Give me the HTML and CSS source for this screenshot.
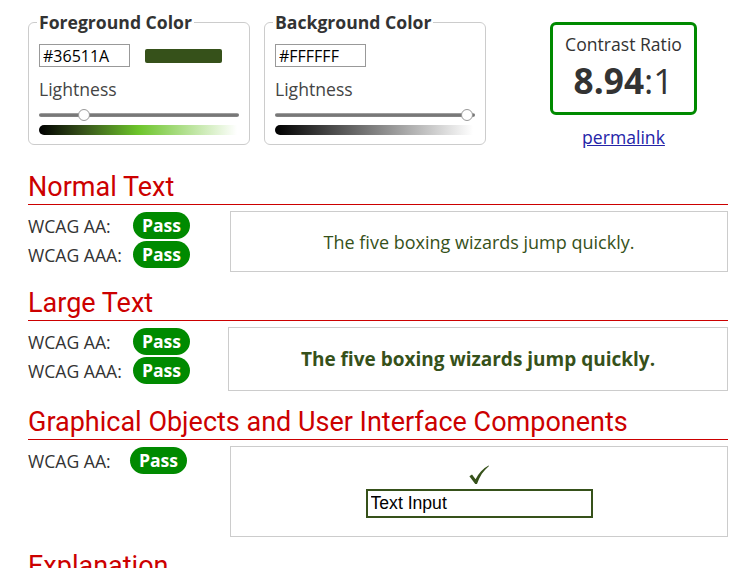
FILE: index.html
```html
<!DOCTYPE html>
<html lang="en">
<head>
<meta charset="utf-8">
<title>Contrast Checker</title>
<link rel="stylesheet" href="styles.css">
</head>
<body>
<div class="page">
  <div class="top">
    <fieldset class="picker">
      <legend class="picker-legend">Foreground Color</legend>
      <div class="hex-row">
        <input class="hex" type="text" value="#36511A">
        <span class="swatch"></span>
      </div>
      <div class="light-label">Lightness</div>
      <div class="slider">
        <div class="track"></div>
        <span class="thumb" style="--pos:0.21"></span>
      </div>
      <div class="grad grad-fg"></div>
    </fieldset>
    <fieldset class="picker picker-bg">
      <legend class="picker-legend">Background Color</legend>
      <div class="hex-row">
        <input class="hex" type="text" value="#FFFFFF">
      </div>
      <div class="light-label">Lightness</div>
      <div class="slider">
        <div class="track"></div>
        <span class="thumb" style="--pos:0.99"></span>
      </div>
      <div class="grad grad-bg"></div>
    </fieldset>
    <div class="ratio-col">
      <div class="ratio-box">
        <div class="ratio-title">Contrast Ratio</div>
        <div class="ratio-val"><b>8.94</b>:1</div>
      </div>
      <a class="permalink" href="#">permalink</a>
    </div>
  </div>

  <section class="result">
    <h2 class="result-title">Normal Text</h2>
    <div class="result-body">
      <div class="levels">
        <div class="level"><span class="level-name">WCAG AA:</span><span class="pass">Pass</span></div>
        <div class="level"><span class="level-name">WCAG AAA:</span><span class="pass">Pass</span></div>
      </div>
      <div class="sample sample-normal">The five boxing wizards jump quickly.</div>
    </div>
  </section>

  <section class="result">
    <h2 class="result-title">Large Text</h2>
    <div class="result-body">
      <div class="levels levels-large">
        <div class="level"><span class="level-name">WCAG AA:</span><span class="pass">Pass</span></div>
        <div class="level"><span class="level-name">WCAG AAA:</span><span class="pass">Pass</span></div>
      </div>
      <div class="sample sample-large">The five boxing wizards jump quickly.</div>
    </div>
  </section>

  <section class="result">
    <h2 class="result-title">Graphical Objects and User Interface Components</h2>
    <div class="result-body">
      <div class="levels">
        <div class="level"><span class="level-name level-name-narrow">WCAG AA:</span><span class="pass">Pass</span></div>
      </div>
      <div class="sample sample-ui">
        <svg class="check" width="20" height="19" viewBox="0 0 20 19" aria-hidden="true">
          <path d="M0.4 11.3 L3 9.6 L6.6 14.2 C9.6 8.2 14 3.4 19.6 0.4 L20 1 C14.6 5.4 10.4 11.6 8 19 L6.2 19 Z" fill="#36511A"/>
        </svg>
        <input class="ui-input" type="text" value="Text Input">
      </div>
    </div>
  </section>

  <section class="result result-last">
    <h2 class="result-title">Explanation</h2>
  </section>
</div>
</body>
</html>
```
FILE: styles.css
```css
html, body {
  margin: 0;
  padding: 0;
  background: #fff;
}
body {
  font-family: "Open Sans", "DejaVu Sans", sans-serif;
  font-size: 17.6px;
  color: #333;
}
.page {
  padding: 10px 16px 0 28px;
}

/* top row */
.top {
  display: flex;
  align-items: flex-start;
}
.picker {
  box-sizing: border-box;
  width: 222px;
  margin: 0;
  padding: 10px 10px 9px;
  border: 1px solid #ccc;
  border-radius: 6px;
}
.picker-bg {
  margin-left: 14px;
}
.picker-legend {
  padding: 0 2px;
  margin-left: -2px;
  font-weight: 700;
  font-size: 17.6px;
  line-height: 24px;
  color: #333;
}
.hex-row {
  display: flex;
  align-items: center;
  height: 23px;
}
.hex {
  box-sizing: border-box;
  width: 91px;
  height: 23px;
  margin: 0;
  padding: 0 3px;
  border: 1px solid #999;
  border-radius: 0;
  font-family: "Open Sans", sans-serif;
  font-size: 16px;
  color: #000;
  background: #fff;
  outline: none;
}
.swatch {
  width: 77px;
  height: 14px;
  margin-left: 15px;
  border-radius: 2px;
  background: #36511A;
}
.light-label {
  margin-top: 10px;
  line-height: 24px;
  color: #444;
}
.slider {
  position: relative;
  height: 12px;
  margin-top: 8px;
}
.track {
  position: absolute;
  left: 0;
  right: 0;
  top: 4px;
  height: 4px;
  border-radius: 2px;
  background: linear-gradient(to bottom, #b0b0b0, #6e6e6e 45%, #8a8a8a);
}
.thumb {
  position: absolute;
  top: 0;
  left: calc((100% - 12px) * var(--pos));
  box-sizing: border-box;
  width: 12px;
  height: 12px;
  border-radius: 50%;
  border: 1px solid #999;
  background: #fff;
}
.grad {
  height: 10px;
  margin-top: 4px;
  margin-right: 2px;
  border-radius: 5px 0 0 5px;
}
.grad-fg {
  background: linear-gradient(to right, #000 0%, #36511a 22%, #6cc42a 50%, #fff 100%);
}
.grad-bg {
  background: linear-gradient(to right, #000 0%, #fff 100%);
}

.ratio-col {
  margin-left: 64px;
  margin-top: 12px;
  display: flex;
  flex-direction: column;
  align-items: center;
}
.ratio-box {
  box-sizing: border-box;
  width: 147px;
  height: 93px;
  padding-top: 7px;
  border: 3px solid #008a00;
  border-radius: 6px;
  text-align: center;
}
.ratio-title {
  line-height: 24px;
  color: #333;
}
.ratio-val {
  font-size: 35.2px;
  line-height: 48px;
  color: #333;
}
.ratio-val b {
  font-weight: 700;
}
.permalink {
  margin-top: 10px;
  line-height: 24px;
  color: #2424a8;
  text-decoration: underline;
}

/* result sections */
.result {
  margin-top: 16px;
}
.top + .result {
  margin-top: 23px;
}
.result-last {
  margin-top: 14px;
}
.result-title {
  margin: 0;
  padding-bottom: 1px;
  border-bottom: 1px solid #cc0000;
  font-family: Roboto, "Liberation Sans", sans-serif;
  font-weight: 400;
  font-size: 27px;
  line-height: 31px;
  color: #cc0000;
}
.result-body {
  display: flex;
  align-items: flex-start;
  margin-top: 6px;
}
.levels {
  width: 202px;
  flex: none;
}
.levels-large {
  width: 200px;
}
.level {
  display: flex;
  align-items: center;
  height: 29px;
}
.level-name {
  width: 105px;
  flex: none;
  color: #333;
}
.level-name-narrow {
  width: 102px;
}
.pass {
  box-sizing: border-box;
  width: 57px;
  height: 27px;
  border-radius: 14px;
  background: #008a00;
  color: #fff;
  font-weight: 700;
  text-align: center;
  line-height: 27px;
}
.sample {
  flex: 1;
  box-sizing: border-box;
  border: 1px solid #ccc;
  text-align: center;
  color: #36511A;
}
.sample-normal {
  padding: 17.5px 10px;
  font-size: 18px;
  line-height: 24px;
}
.sample-large {
  padding: 17px 10px;
  font-size: 19px;
  font-weight: 700;
  line-height: 28px;
}
.sample-ui {
  display: flex;
  flex-direction: column;
  align-items: center;
  padding: 18px 10px;
}
.check {
  display: block;
}
.ui-input {
  box-sizing: border-box;
  width: 227px;
  height: 29px;
  margin: 5px 0 0;
  padding: 0 3px;
  border: 2px solid #36511A;
  border-radius: 0;
  font-family: "Liberation Sans", Arial, sans-serif;
  font-size: 17.6px;
  color: #000;
  background: #fff;
  outline: none;
}
```
